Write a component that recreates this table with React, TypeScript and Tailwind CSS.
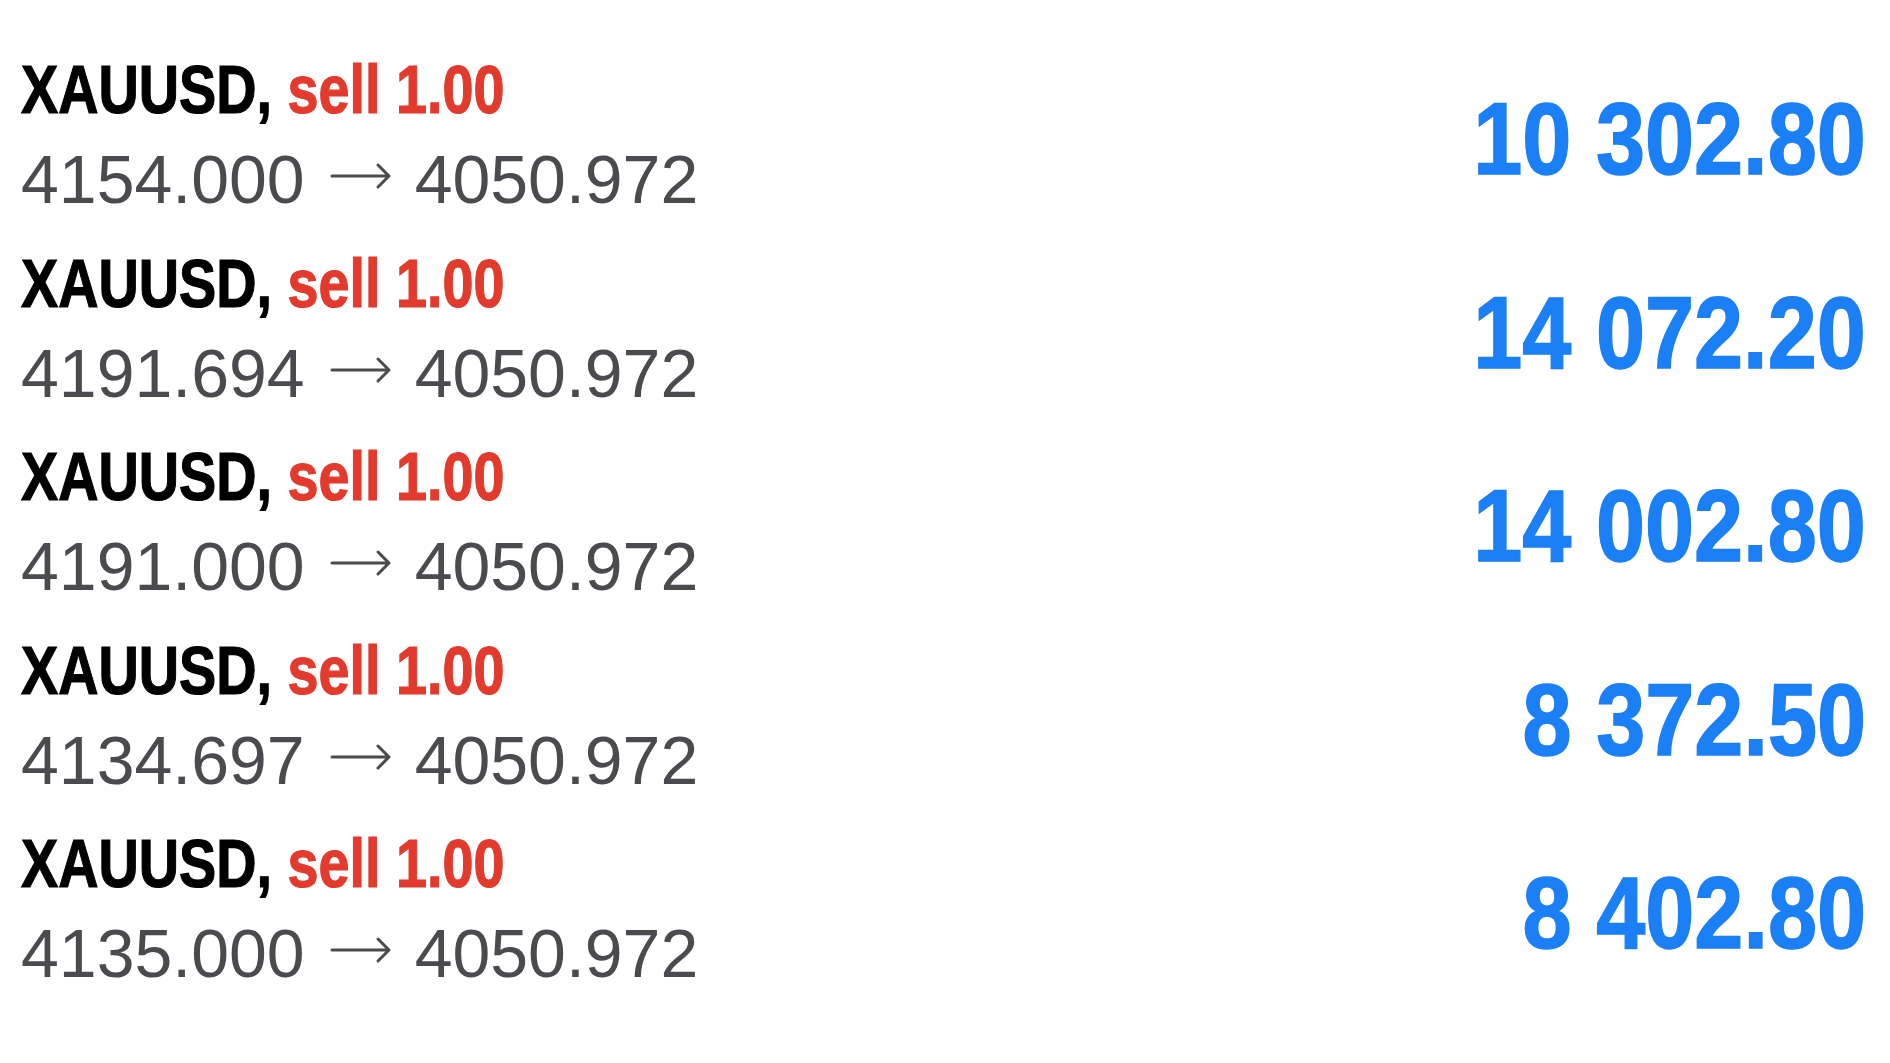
const trades = [
  { open: '4154.000', close: '4050.972', profit: '10 302.80' },
  { open: '4191.694', close: '4050.972', profit: '14 072.20' },
  { open: '4191.000', close: '4050.972', profit: '14 002.80' },
  { open: '4134.697', close: '4050.972', profit: '8 372.50' },
  { open: '4135.000', close: '4050.972', profit: '8 402.80' },
]

function Arrow() {
  return (
    <svg
      viewBox="0 0 62 28"
      className="ml-[25px] mr-[23px] inline-block h-[28px] w-[62px] align-[13px]"
      fill="none"
      stroke="#4a4a4f"
      strokeWidth={3}
      strokeLinecap="round"
      strokeLinejoin="round"
    >
      <path d="M2 14h57M48 3l11 11-11 11" />
    </svg>
  )
}

function TradeRow({ open, close, profit }: { open: string; close: string; profit: string }) {
  return (
    <div className="flex h-[193.5px] items-start justify-between">
      <div className="flex flex-col">
        {/* symbol + side, condensed */}
        <p className="font-['Liberation_Sans',sans-serif] text-[68px] font-bold leading-[90px] text-black">
          <span className="inline-block origin-left scale-x-[0.82] whitespace-nowrap [-webkit-text-stroke:1.2px_currentColor]">
            XAUUSD, <span className="text-[#e23b2e]">sell 1.00</span>
          </span>
        </p>
        <p className="whitespace-nowrap font-['Liberation_Sans',sans-serif] text-[68px] leading-[90px] text-[#4a4a4f]">
          {open}
          <Arrow />
          {close}
        </p>
      </div>
      <p className="mt-[44px] origin-right scale-x-[0.865] whitespace-nowrap font-['Liberation_Sans',sans-serif] text-[102px] font-bold leading-[102px] text-[#1b7ff6] [-webkit-text-stroke:1.5px_currentColor]">
        {profit}
      </p>
    </div>
  )
}

export default function App() {
  return (
    <div className="h-[1063px] w-full overflow-hidden bg-white pl-[21px] pr-[24px] pt-[44px]">
      {trades.map((t, i) => (
        <TradeRow key={i} {...t} />
      ))}
    </div>
  )
}
